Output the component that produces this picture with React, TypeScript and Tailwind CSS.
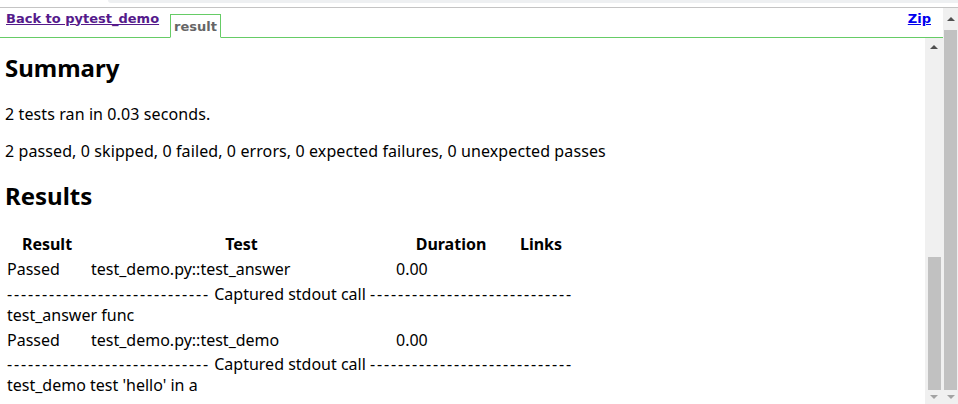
import React from "react";

const body = { fontFamily: '"Noto Sans", "Open Sans", sans-serif' };
const chrome = { fontFamily: '"DejaVu Sans", Verdana, sans-serif' };

const dashes = "-".repeat(29);

function ArrowUp() {
  return <div className="h-0 w-0 border-x-[4px] border-b-[4px] border-x-transparent border-b-[#505050]" />;
}
function ArrowDown() {
  return <div className="h-0 w-0 border-x-[4px] border-t-[4px] border-x-transparent border-t-[#a3a3a3]" />;
}

function LogLine() {
  return (
    <div className="flex h-[21px] items-center pl-[2px] whitespace-pre">
      <span className="tracking-[1.85px]">{dashes}</span>
      <span> Captured stdout call </span>
      <span className="tracking-[1.85px]">{dashes}</span>
    </div>
  );
}

function ResultRow({ name, duration }: { name: string; duration: string }) {
  return (
    <div className="grid h-[21px] grid-cols-[84px_305px_114px_66px] items-center">
      <span className="pl-[2px]">Passed</span>
      <span className="pl-[2px]">{name}</span>
      <span className="pl-[2px]">{duration}</span>
      <span />
    </div>
  );
}

export default function App() {
  return (
    <div className="flex h-[404px] w-[958px] flex-col overflow-hidden bg-white">
      {/* browser strip */}
      <div className="flex h-[7px] shrink-0">
        <div className="w-[108px]" />
        <div className="h-[3px] flex-1 rounded-bl-[6px] bg-[#eef0f2]" />
      </div>
      <div className="h-px shrink-0 bg-[#c4c4c4]" />

      <div className="flex min-h-0 flex-1">
        <div className="flex min-w-0 flex-1 flex-col">
          {/* header bar */}
          <div
            className="flex h-[30px] shrink-0 items-end border-b border-[#66cc66] text-[13px] font-bold"
            style={chrome}
          >
            <a href="#" className="mb-[9px] ml-[6px] text-[#551a8b] underline">
              Back to pytest_demo
            </a>
            <div className="-mb-px ml-[11px] flex h-[24px] items-center border border-b-white border-[#66cc66] px-[3px] pt-[2px] text-[#666]">
              result
            </div>
            <div className="flex-1" />
            <a href="#" className="mb-[9px] mr-[12px] text-[#0000ee] underline">
              Zip
            </a>
          </div>

          {/* content + inner scrollbar */}
          <div className="flex min-h-0 flex-1">
            <div className="min-w-0 flex-1 overflow-hidden pl-[5px] text-[16px] text-black" style={body}>
              <h2 className="mt-[14px] text-[24px] leading-[32px] font-bold">Summary</h2>
              <p className="mt-[19px] leading-[22px] tracking-[0.1px]">2 tests ran in 0.03 seconds.</p>
              <p className="mt-[15px] leading-[22px] tracking-[0.1px]">
                2 passed, 0 skipped, 0 failed, 0 errors, 0 expected failures, 0 unexpected passes
              </p>
              <h2 className="mt-[18px] text-[24px] leading-[32px] font-bold">Results</h2>

              <div className="mt-[20px] w-[569px]">
                <div className="grid h-[21px] grid-cols-[84px_305px_114px_66px] items-center text-center font-bold">
                  <span>Result</span>
                  <span>Test</span>
                  <span>Duration</span>
                  <span>Links</span>
                </div>
                <div className="mt-[4px]">
                  <ResultRow name="test_demo.py::test_answer" duration="0.00" />
                </div>
                <div className="mt-[5px]">
                  <LogLine />
                </div>
                <div className="flex h-[21px] items-center pl-[2px]">test_answer func</div>
                <div className="mt-[3px]">
                  <ResultRow name="test_demo.py::test_demo" duration="0.00" />
                </div>
                <div className="mt-[4px]">
                  <LogLine />
                </div>
                <div className="flex h-[21px] items-center pl-[2px]">test_demo test 'hello' in a</div>
              </div>
            </div>

            {/* inner scrollbar */}
            <div className="flex w-[18px] shrink-0 flex-col items-center bg-[#f0f0f0]">
              <div className="flex h-[17px] items-center justify-center pt-[1px]">
                <ArrowUp />
              </div>
              <div className="flex-1" />
              <div className="h-[133px] w-[13px] bg-[#c1c1c1]" />
              <div className="flex h-[14px] items-center justify-center">
                <ArrowDown />
              </div>
            </div>
          </div>
        </div>

        {/* outer scrollbar */}
        <div className="flex w-[15px] shrink-0 flex-col items-center bg-[#f0f0f0]">
          <div className="flex h-[22px] items-center justify-center">
            <ArrowUp />
          </div>
          <div className="w-[13px] flex-1 bg-[#c1c1c1]" />
          <div className="flex h-[14px] items-center justify-center">
            <ArrowDown />
          </div>
        </div>
      </div>
    </div>
  );
}
